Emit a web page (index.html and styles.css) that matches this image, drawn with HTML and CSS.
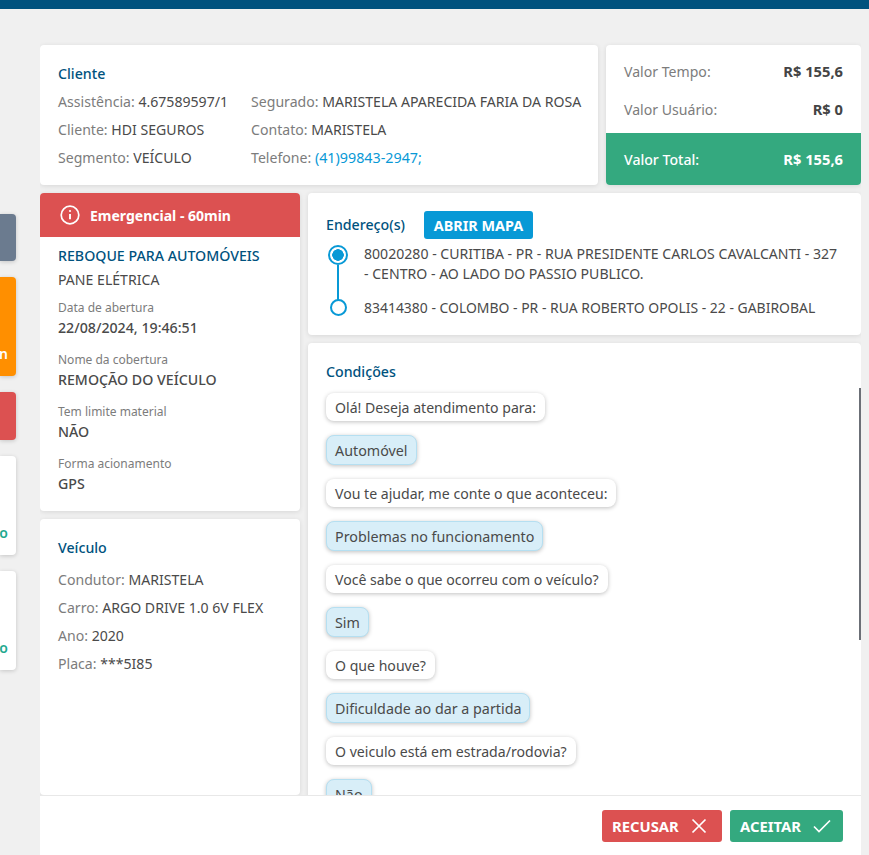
FILE: index.html
```html
<!DOCTYPE html>
<html lang="pt-BR">
<head>
<meta charset="utf-8">
<title>Assistência</title>
<link rel="stylesheet" href="styles.css">
</head>
<body>
<header class="topbar"></header>
<div class="page">
  <aside class="rail">
    <div class="rail-card rail-slate"></div>
    <div class="rail-card rail-orange"><span>n</span></div>
    <div class="rail-card rail-red"></div>
    <div class="rail-card rail-white"><span>o</span></div>
    <div class="rail-card rail-white"><span>o</span></div>
  </aside>
  <main class="main">
    <div class="content">
      <div class="top-row">
        <section class="card client">
          <h2 class="title">Cliente</h2>
          <div class="client-cols">
            <div class="col">
              <p class="line">Assistência: <b>4.67589597/1</b></p>
              <p class="line">Cliente: <b>HDI SEGUROS</b></p>
              <p class="line">Segmento: <b>VEÍCULO</b></p>
            </div>
            <div class="col">
              <p class="line">Segurado: <b>MARISTELA APARECIDA FARIA DA ROSA</b></p>
              <p class="line">Contato: <b>MARISTELA</b></p>
              <p class="line">Telefone: <a class="phone">(41)99843-2947;</a></p>
            </div>
          </div>
        </section>
        <section class="card values">
          <div class="value-row"><span>Valor Tempo:</span><strong>R$ 155,6</strong></div>
          <div class="value-row"><span>Valor Usuário:</span><strong>R$ 0</strong></div>
          <div class="value-total"><span>Valor Total:</span><strong>R$ 155,6</strong></div>
        </section>
      </div>
      <div class="bottom-row">
        <div class="left">
          <section class="card service">
            <div class="alert">
              <svg class="alert-icon" viewBox="0 0 20 20" width="20" height="20" fill="none" stroke="#fff"><circle cx="10" cy="10" r="8.8" stroke-width="1.7"/><path d="M10 9v5.2" stroke-width="1.9"/><circle cx="10" cy="6" r="1.1" fill="#fff" stroke="none"/></svg>
              <span>Emergencial - 60min</span>
            </div>
            <div class="service-body">
              <h2 class="title service-title">REBOQUE PARA AUTOMÓVEIS</h2>
              <p class="service-sub">PANE ELÉTRICA</p>
              <div class="field"><small>Data de abertura</small><b>22/08/2024, 19:46:51</b></div>
              <div class="field"><small>Nome da cobertura</small><b>REMOÇÃO DO VEÍCULO</b></div>
              <div class="field"><small>Tem limite material</small><b>NÃO</b></div>
              <div class="field"><small>Forma acionamento</small><b>GPS</b></div>
            </div>
          </section>
          <section class="card vehicle">
            <h2 class="title">Veículo</h2>
            <p class="line">Condutor: <b>MARISTELA</b></p>
            <p class="line">Carro: <b>ARGO DRIVE 1.0 6V FLEX</b></p>
            <p class="line">Ano: <b>2020</b></p>
            <p class="line">Placa: <b>***5I85</b></p>
          </section>
        </div>
        <div class="right">
          <section class="card address">
            <div class="address-head">
              <h2 class="title">Endereço(s)</h2>
              <button class="map-btn">ABRIR MAPA</button>
            </div>
            <div class="stops">
              <div class="stop">
                <span class="dot-slot"><span class="dot dot-active"></span></span>
                <p>80020280 - CURITIBA - PR - RUA PRESIDENTE CARLOS CAVALCANTI - 327 - CENTRO - AO LADO DO PASSIO PUBLICO.</p>
              </div>
              <div class="stop">
                <span class="dot-slot"><span class="dot"></span></span>
                <p>83414380 - COLOMBO - PR - RUA ROBERTO OPOLIS - 22 - GABIROBAL</p>
              </div>
            </div>
          </section>
          <section class="card conditions">
            <h2 class="title">Condições</h2>
            <div class="chat">
              <div class="bubble">Olá! Deseja atendimento para:</div>
              <div class="bubble reply">Automóvel</div>
              <div class="bubble">Vou te ajudar, me conte o que aconteceu:</div>
              <div class="bubble reply">Problemas no funcionamento</div>
              <div class="bubble">Você sabe o que ocorreu com o veículo?</div>
              <div class="bubble reply">Sim</div>
              <div class="bubble">O que houve?</div>
              <div class="bubble reply">Dificuldade ao dar a partida</div>
              <div class="bubble">O veiculo está em estrada/rodovia?</div>
              <div class="bubble reply">Não</div>
            </div>
            <span class="thumb"></span>
          </section>
        </div>
      </div>
    </div>
    <footer class="footer">
      <button class="action refuse">RECUSAR
        <svg viewBox="0 0 16 16" width="16" height="16" fill="none" stroke="#fff" stroke-width="1.7"><path d="M1.5 1.5l13 13M14.5 1.5l-13 13"/></svg>
      </button>
      <button class="action accept">ACEITAR
        <svg viewBox="0 0 18 14" width="18" height="14" fill="none" stroke="#fff" stroke-width="1.7"><path d="M1 7.5l5 5L17 1.5"/></svg>
      </button>
    </footer>
  </main>
</div>
</body>
</html>
```
FILE: styles.css
```css
* { box-sizing: border-box; }
html, body { margin: 0; height: 100%; overflow: hidden; }
body {
  background: #f0f0f0;
  font-family: "Noto Sans", "Open Sans", sans-serif;
  font-size: 14.1px;
  color: #4a4a4a;
}
p, h2 { margin: 0; }
.topbar { height: 9px; background: #00527e; }
.page { display: flex; height: 846px; }

.rail { width: 16px; flex: none; display: flex; flex-direction: column; gap: 16px; padding-top: 205px; }
.rail-card { border-radius: 0 4px 4px 0; box-shadow: 0 1px 4px rgba(0,0,0,.18); display: flex; align-items: flex-end; justify-content: flex-end; font-size: 14px; font-weight: 600; }
.rail-slate { height: 47px; background: #6b7b8f; }
.rail-orange { height: 99px; background: #ff8f00; color: #fff; padding: 0 8px 13px 0; }
.rail-red { height: 48px; background: #dc5151; }
.rail-white { height: 99px; background: #fff; color: #1fa98f; padding: 0 8px 13px 0; }

.main { width: 821px; margin-left: 24px; display: flex; flex-direction: column; height: 846px; }
.content { flex: 1; min-height: 0; overflow: hidden; padding-top: 36px; display: flex; flex-direction: column; gap: 8px; }
.footer { height: 60px; flex: none; background: #fff; border-top: 1px solid #e8e8e8; display: flex; justify-content: flex-end; align-items: flex-start; gap: 8px; padding: 14px 18px 0 0; }

.card { background: #fff; border-radius: 4px; box-shadow: 0 1px 5px rgba(0,0,0,.1); }
.title { font-size: 14.2px; font-weight: 500; color: #00527e; line-height: 20px; }
.line { line-height: 28px; color: #7c7c7c; white-space: nowrap; }
.line b { font-weight: 400; color: #4a4a4a; }

.top-row { display: flex; gap: 8px; height: 140px; flex: none; }
.client { width: 558px; padding: 19px 18px 0; }
.client-cols { display: flex; gap: 23px; margin-top: 4px; }
.phone { color: #0899d6; font-size: 14.3px; }

.values { width: 255px; overflow: hidden; display: flex; flex-direction: column; }
.value-row, .value-total { display: flex; justify-content: space-between; align-items: center; padding: 0 18px; }
.value-row { height: 38px; color: #7c7c7c; }
.value-row:first-child { height: 45px; padding-top: 7px; }
.value-row strong { color: #444; font-weight: 700; font-size: 14.7px; }
.value-total { margin-top: auto; height: 52px; background: #34a97f; color: #fff; font-weight: 500; }
.value-total strong { font-weight: 700; font-size: 14.7px; }

.bottom-row { display: flex; gap: 8px; flex: 1; min-height: 0; }
.left { width: 260px; flex: none; display: flex; flex-direction: column; gap: 8px; }
.right { width: 553px; flex: none; display: flex; flex-direction: column; gap: 8px; }

.alert { height: 44px; background: #dc5151; color: #fff; font-weight: 700; font-size: 14px; display: flex; align-items: center; gap: 10px; padding-left: 20px; border-radius: 4px 4px 0 0; }
.alert-icon { flex: none; }
.service { height: 318px; flex: none; }
.service-body { padding: 9px 18px 0; }
.service-title { line-height: 20px; }
.service-sub { line-height: 24px; margin-top: 2px; }
.field { margin-top: 12px; display: flex; flex-direction: column; }
.service-sub + .field { margin-top: 5px; }
.field small { font-size: 12px; line-height: 22px; color: #7c7c7c; }
.field b { font-weight: 500; line-height: 18px; font-size: 14.2px; }
.vehicle { flex: 1; padding: 19px 18px 0; }
.vehicle .title { margin-bottom: 8px; }

.address { height: 142px; flex: none; padding: 18px 18px 0; }
.address-head { display: flex; align-items: center; gap: 19px; }
.map-btn { border: 0; height: 28px; width: 109px; padding: 0; background: #0899d6; color: #fff; font: 700 14.4px "Noto Sans", sans-serif; border-radius: 3px; }
.stops { display: flex; flex-direction: column; gap: 14px; margin-top: 5px; }
.stop { display: flex; gap: 16px; padding-left: 2px; position: relative; }
.stop p { line-height: 20px; }
.stop + .stop p { font-size: 13.95px; }
.dot-slot { width: 20px; flex: none; display: flex; justify-content: center; align-items: flex-start; padding-top: 1px; }
.dot { width: 17px; height: 17px; flex: none; border-radius: 50%; border: 2px solid #0899d6; background: #fff; position: relative; z-index: 1; }
.dot-active { width: 20px; height: 20px; background: radial-gradient(circle, #0899d6 0 5.5px, #fff 6px); }
.stop:first-child::before { content: ""; position: absolute; left: 11px; top: 21px; height: 35px; width: 2px; background: #0899d6; }

.conditions { flex: 1; padding: 19px 18px 0; position: relative; }
.chat { display: flex; flex-direction: column; align-items: flex-start; gap: 14px; margin-top: 11px; }
.bubble { height: 28px; line-height: 30px; padding: 0 9px; background: #fff; border-radius: 8px; box-shadow: 0 1px 4px rgba(0,0,0,.25); white-space: nowrap; }
.reply { height: 30px; line-height: 30px; padding: 0 8px; font-size: 14.3px; background: #d8eef8; border: 1px solid #b5dff1; }
.thumb { position: absolute; right: 0; top: 45px; width: 2px; height: 252px; background: #6b6f76; }

.action { border: 0; height: 32px; border-radius: 3px; color: #fff; font: 700 14.8px "Noto Sans", sans-serif; display: flex; align-items: center; gap: 12px; padding: 0 10px; }
.refuse { width: 120px; background: #dc5151; }
.accept { width: 113px; background: #34a97f; }
```
